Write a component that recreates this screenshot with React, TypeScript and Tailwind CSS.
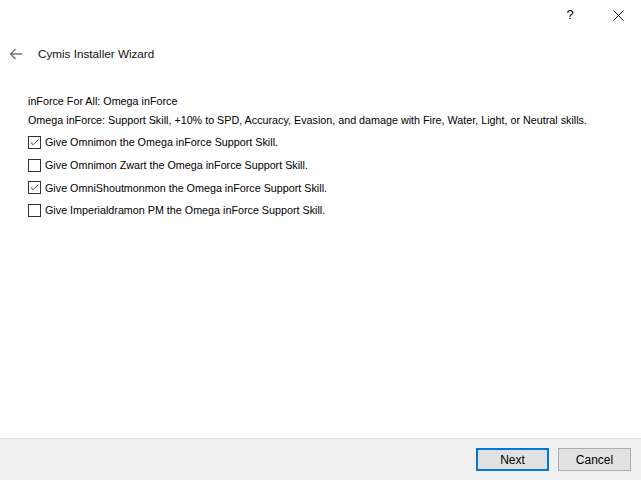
import { Check } from "lucide-react";

const options = [
  { label: "Give Omnimon the Omega inForce Support Skill.", checked: true },
  { label: "Give Omnimon Zwart the Omega inForce Support Skill.", checked: false },
  { label: "Give OmniShoutmonmon the Omega inForce Support Skill.", checked: true },
  { label: "Give Imperialdramon PM the Omega inForce Support Skill.", checked: false },
];

function CheckBox({ checked }: { checked: boolean }) {
  return (
    <div className="w-[13px] h-[13px] border border-[#333333] bg-white flex items-center justify-center shrink-0">
      {checked && <Check size={11} strokeWidth={1.75} className="text-[#222222]" />}
    </div>
  );
}

export default function App() {
  return (
    <div className="w-[641px] h-[480px] bg-white flex flex-col text-[10.75px] text-black font-['Liberation_Sans',Arial,sans-serif] whitespace-nowrap">
      <div className="h-[30px] flex items-center justify-end">
        <div className="w-[46px] h-[30px] flex items-center justify-center text-[13px] mr-[2px]">?</div>
        <div className="w-[46px] h-[30px] flex items-center justify-center">
          <svg width="11" height="11" viewBox="0 0 11 11" stroke="#111" strokeWidth="1">
            <path d="M0.5 0.5L10.5 10.5M10.5 0.5L0.5 10.5" />
          </svg>
        </div>
      </div>
      <div className="h-[48px] flex items-center pl-[9px]">
        <svg width="14" height="12" viewBox="0 0 14 12" fill="none" stroke="#777" strokeWidth="1.5">
          <path d="M13 6H1.5M6.5 1L1.5 6l5 5" />
        </svg>
        <span className="ml-[15px] text-[11.7px] text-[#111]">Cymis Installer Wizard</span>
      </div>
      <div className="flex-1 pl-[28px] pt-[14px] flex flex-col">
        <div className="h-[19px] leading-[19px]">inForce For All: Omega inForce</div>
        <div className="h-[19px] leading-[19px]">
          Omega inForce: Support Skill, +10% to SPD, Accuracy, Evasion, and damage with Fire, Water, Light, or Neutral skills.
        </div>
        <div className="flex flex-col pt-[1px]">
          {options.map((o) => (
            <div key={o.label} className="h-[22.7px] flex items-center">
              <CheckBox checked={o.checked} />
              <span className="ml-[4px]">{o.label}</span>
            </div>
          ))}
        </div>
      </div>
      <div className="h-[42px] bg-[#f0f0f0] border-t border-[#dfdfdf] flex items-center justify-end pr-[10px] gap-[9px] text-[12px]">
        <button className="w-[73px] h-[23px] bg-[#e1e1e1] border-2 border-[#0078d7] flex items-center justify-center">Next</button>
        <button className="w-[73px] h-[23px] bg-[#e1e1e1] border border-[#adadad] flex items-center justify-center">Cancel</button>
      </div>
    </div>
  );
}
